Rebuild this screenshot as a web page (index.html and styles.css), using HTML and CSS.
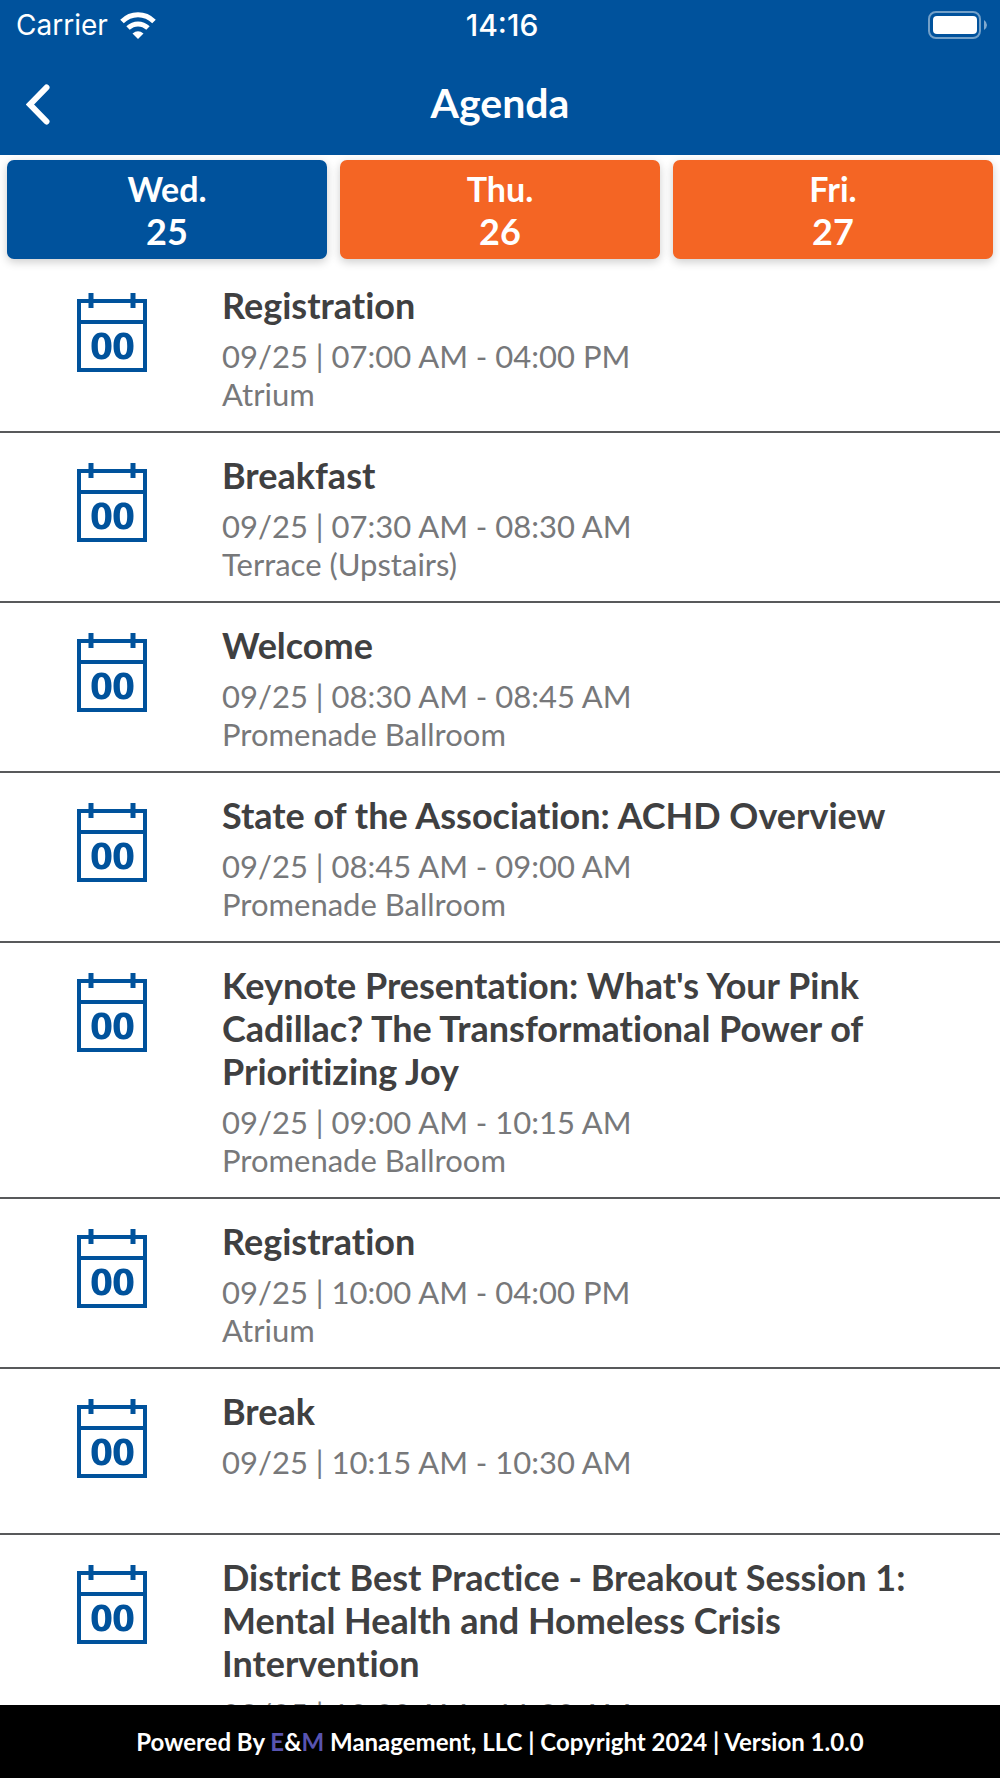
FILE: index.html
```html
<!DOCTYPE html>
<html lang="en">
<head>
<meta charset="utf-8">
<meta name="viewport" content="width=device-width, initial-scale=1">
<title>Agenda</title>
<link rel="stylesheet" href="styles.css">
</head>
<body>
<svg width="0" height="0" class="sprite" aria-hidden="true">
  <symbol id="calendar" viewBox="0 0 70 80">
    <path fill="none" stroke="currentColor" stroke-width="4" d="M2 8H68V77H2ZM2 29H68"/>
    <path fill="none" stroke="currentColor" stroke-width="5" d="M14 0V15M56 0V15"/>
    <path fill="currentColor" fill-rule="evenodd" d="M24.500 39.500C31 39.500 34.500 44 34.500 53S31 66.500 24.500 66.500 14.500 62 14.500 53 18 39.500 24.500 39.500ZM24.500 44C22 44 20.800 47 20.800 53S22 62 24.500 62 28.200 59 28.200 53 27 44 24.500 44ZM46.500 39.500C53 39.500 56.500 44 56.500 53S53 66.500 46.500 66.500 36.500 62 36.500 53 40 39.500 46.500 39.500ZM46.500 44C44 44 42.800 47 42.800 53S44 62 46.500 62 50.200 59 50.200 53 49 44 46.500 44Z"/>
  </symbol>
</svg>
<header class="top">
  <div class="status">
    <div class="carrier">
      <span>Carrier</span>
      <svg class="wifi" viewBox="0 0 36 27" aria-hidden="true">
        <path fill="none" stroke="#fff" stroke-width="5" d="M2 9.500C11 0.500 25 0.500 34 9.500"/>
        <path fill="none" stroke="#fff" stroke-width="5" d="M8 16C14 10.500 22 10.500 28 16"/>
        <path fill="#fff" d="M12.500 21.500Q18 17 23.500 21.500L18 27Z"/>
      </svg>
    </div>
    <time class="clock">14:16</time>
    <svg class="battery" viewBox="0 0 60 28" aria-hidden="true">
      <rect x="1" y="1" width="51" height="26" rx="7" fill="none" stroke="#fff" stroke-opacity=".45" stroke-width="2"/>
      <rect x="5" y="5" width="44" height="18" rx="4" fill="#fff"/>
      <path fill="#fff" fill-opacity=".5" d="M56 9Q59 11 59 14T56 19Z"/>
    </svg>
  </div>
  <div class="bar">
    <button class="back" type="button" aria-label="Back">
      <svg viewBox="0 0 24 41" aria-hidden="true"><path fill="none" stroke="#fff" stroke-width="6" stroke-linecap="round" stroke-linejoin="miter" d="M20.500 3.500L4 20.500L20.500 37.500"/></svg>
    </button>
    <h1 class="heading">Agenda</h1>
  </div>
</header>
<nav class="days" aria-label="Days">
  <button class="day current" type="button"><span>Wed.</span><span class="num">25</span></button>
  <button class="day" type="button"><span>Thu.</span><span class="num">26</span></button>
  <button class="day" type="button"><span>Fri.</span><span class="num">27</span></button>
</nav>
<main class="scroll">
  <ul class="list">
    <li class="item"><svg class="icon" aria-hidden="true"><use href="#calendar"/></svg><div class="info"><h2 class="title">Registration</h2><p>09/25 | 07:00 AM - 04:00 PM</p><p>Atrium</p></div></li>
    <li class="item"><svg class="icon" aria-hidden="true"><use href="#calendar"/></svg><div class="info"><h2 class="title">Breakfast</h2><p>09/25 | 07:30 AM - 08:30 AM</p><p>Terrace (Upstairs)</p></div></li>
    <li class="item"><svg class="icon" aria-hidden="true"><use href="#calendar"/></svg><div class="info"><h2 class="title">Welcome</h2><p>09/25 | 08:30 AM - 08:45 AM</p><p>Promenade Ballroom</p></div></li>
    <li class="item"><svg class="icon" aria-hidden="true"><use href="#calendar"/></svg><div class="info"><h2 class="title">State of the Association: ACHD Overview</h2><p>09/25 | 08:45 AM - 09:00 AM</p><p>Promenade Ballroom</p></div></li>
    <li class="item"><svg class="icon" aria-hidden="true"><use href="#calendar"/></svg><div class="info"><h2 class="title">Keynote Presentation: What's Your Pink Cadillac? The Transformational Power of Prioritizing Joy</h2><p>09/25 | 09:00 AM - 10:15 AM</p><p>Promenade Ballroom</p></div></li>
    <li class="item"><svg class="icon" aria-hidden="true"><use href="#calendar"/></svg><div class="info"><h2 class="title">Registration</h2><p>09/25 | 10:00 AM - 04:00 PM</p><p>Atrium</p></div></li>
    <li class="item"><svg class="icon" aria-hidden="true"><use href="#calendar"/></svg><div class="info"><h2 class="title">Break</h2><p>09/25 | 10:15 AM - 10:30 AM</p></div></li>
    <li class="item"><svg class="icon" aria-hidden="true"><use href="#calendar"/></svg><div class="info"><h2 class="title">District Best Practice - Breakout Session 1: Mental Health and Homeless Crisis Intervention</h2><p>09/25 | 10:30 AM - 11:30 AM</p></div></li>
  </ul>
</main>
<footer class="foot">Powered By <span class="brand">E</span>&amp;<span class="brand">M</span> Management, LLC | Copyright 2024 | Version 1.0.0</footer>
</body>
</html>
```
FILE: styles.css
```css
* { box-sizing: border-box; }
body {
  margin: 0;
  height: 100vh;
  display: flex;
  flex-direction: column;
  background: #fff;
  color: #3f4041;
  font-family: Lato, "Liberation Sans", sans-serif;
  font-variant-ligatures: none;
}
h1, h2, p, ul { margin: 0; padding: 0; }
.sprite { position: absolute; }
.top { background: #00529c; color: #fff; flex: none; }
.status {
  display: grid;
  grid-template-columns: 1fr auto 1fr;
  align-items: center;
  height: 50px;
  padding: 0 12px 0 16px;
  font: 28px/36px Inter, sans-serif;
}
.carrier { display: flex; align-items: center; gap: 12px; }
.wifi { width: 36px; height: 27px; }
.clock { font-size: 30px; font-weight: 500; }
.battery { width: 60px; height: 28px; justify-self: end; }
.bar {
  display: grid;
  grid-template-columns: 80px 1fr 80px;
  align-items: center;
  height: 105px;
}
.back { border: 0; background: none; padding: 4px 0 0 26px; height: 80px; display: flex; align-items: center; }
.back svg { width: 24px; height: 41px; }
.heading { font-size: 41px; line-height: 50px; font-weight: 700; text-align: center; }
.days { display: grid; grid-template-columns: repeat(3, 1fr); gap: 13px; padding: 5px 7px 4px; flex: none; }
.day {
  display: flex;
  flex-direction: column;
  align-items: center;
  justify-content: center;
  height: 99px;
  padding: 0;
  border: 0;
  border-radius: 7px;
  background: #f46524;
  box-shadow: 0 3px 10px rgba(0, 0, 0, .2);
  color: #fff;
  font: 700 34px/42px Lato, sans-serif;
}
.day.current { background: #00529c; }
.num { font-size: 36px; }
.scroll { flex: 1; min-height: 0; overflow-y: auto; scrollbar-width: none; }
.list { list-style: none; }
.item {
  display: grid;
  grid-template-columns: 70px 1fr;
  column-gap: 75px;
  align-items: start;
  min-height: 166px;
  padding: 21px 77px 18px;
  border-bottom: 2px solid #58595b;
}
.icon { width: 70px; height: 80px; margin-top: 9px; color: #00529c; }
.title { font-size: 36px; line-height: 43px; font-weight: 700; margin-bottom: 10px; }
.info p { font-size: 31px; line-height: 38px; color: #77787a; }
.foot {
  flex: none;
  height: 73px;
  background: #000;
  color: #fff;
  text-align: center;
  font-size: 24px;
  line-height: 73px;
  font-weight: 700;
}
.brand { color: #5854b0; }
```
